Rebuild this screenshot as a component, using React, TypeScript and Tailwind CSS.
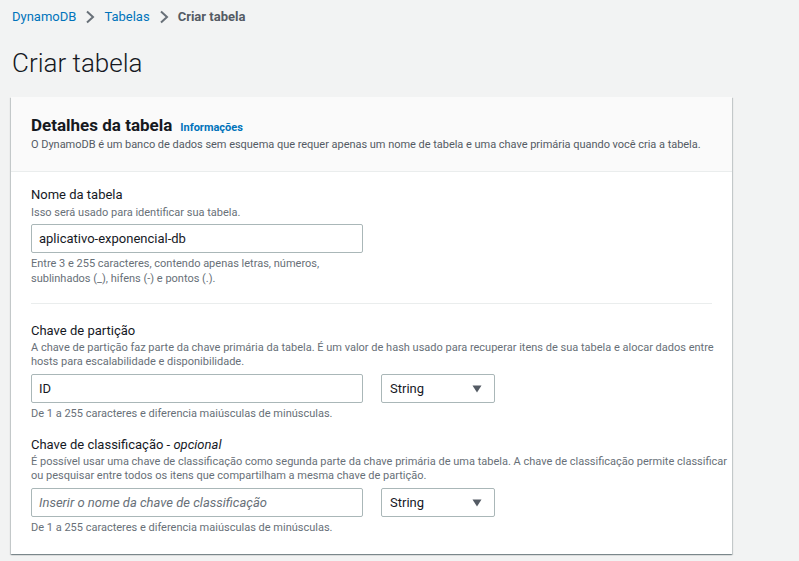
import React from "react";

const Chevron = () => (
  <svg width="10" height="14" viewBox="0 0 10 14" className="mx-[9px]">
    <path d="M2 1.5 L8 7 L2 12.5" fill="none" stroke="#687078" strokeWidth="2" />
  </svg>
);

const Caret = () => (
  <svg width="10" height="8" viewBox="0 0 10 8">
    <path d="M0.5 0.5 H9.5 L5 7.5 Z" fill="#545b64" />
  </svg>
);

const Select = () => (
  <div className="w-[114px] h-[29px] border border-[#aab7b8] rounded-[2px] bg-white flex items-center justify-between pl-[8px] pr-[12px] text-[13px] text-[#16191f]">
    <span>String</span>
    <Caret />
  </div>
);

export default function App() {
  return (
    <div
      className="min-h-[561px] w-full bg-[#f2f3f3] px-[11px] pt-[7px]"
      style={{ fontFamily: "Roboto, 'Noto Sans', Arial, sans-serif" }}
    >
      <div className="flex items-center h-[20px] text-[13px] pl-[1px]">
        <span className="text-[#0073bb]">DynamoDB</span>
        <Chevron />
        <span className="text-[#0073bb]">Tabelas</span>
        <Chevron />
        <span className="text-[#545b64] font-bold">Criar tabela</span>
      </div>
      <h1 className="mt-[21px] h-[30px] leading-[30px] text-[26px] font-light text-[#16191f] pl-[1px]">
        Criar tabela
      </h1>
      <div className="mt-[19px] w-[721px] bg-white shadow-[0_1px_1px_0_rgba(0,28,36,0.3),1px_1px_1px_0_rgba(0,28,36,0.15),-1px_1px_1px_0_rgba(0,28,36,0.15)]">
        <div className="bg-[#fafafa] border-b border-[#eaeded] px-[20px] pt-[16px] pb-[18px]">
          <div className="flex items-baseline h-[24px]">
            <span className="text-[17px] font-bold text-[#16191f]">Detalhes da tabela</span>
            <span className="ml-[8px] text-[11px] font-bold text-[#0073bb]">Informações</span>
          </div>
          <div className="text-[11px] leading-[16px] text-[#545b64] tracking-[-0.03px]">
            O DynamoDB é um banco de dados sem esquema que requer apenas um nome de tabela e uma chave primária quando você cria a tabela.
          </div>
        </div>
        <div className="px-[20px] pt-[13px] pb-[19px]">
          <div className="text-[13px] leading-[20px] text-[#16191f]">Nome da tabela</div>
          <div className="text-[11px] leading-[16px] text-[#687078]">Isso será usado para identificar sua tabela.</div>
          <div className="mt-[3px] w-[332px] h-[29px] border border-[#aab7b8] rounded-[2px] bg-white flex items-center px-[7px] text-[13px] text-[#16191f]">
            aplicativo-exponencial-db
          </div>
          <div className="mt-[3px] text-[11px] leading-[15px] text-[#687078]">
            Entre 3 e 255 caracteres, contendo apenas letras, números,
            <br />
            sublinhados (_), hifens (-) e pontos (.).
          </div>
          <div className="mt-[17px] border-t border-[#eaeded]" />
          <div className="mt-[17px] text-[13px] leading-[20px] text-[#16191f]">Chave de partição</div>
          <div className="text-[11px] leading-[14px] text-[#687078] w-[700px]">
            A chave de partição faz parte da chave primária da tabela. É um valor de hash usado para recuperar itens de sua tabela e alocar dados entre hosts para escalabilidade e disponibilidade.
          </div>
          <div className="mt-[5px] flex gap-[18px]">
            <div className="w-[332px] h-[29px] border border-[#aab7b8] rounded-[2px] bg-white flex items-center px-[7px] text-[13px] text-[#16191f]">
              ID
            </div>
            <Select />
          </div>
          <div className="mt-[3px] text-[11px] leading-[15px] text-[#687078]">
            De 1 a 255 caracteres e diferencia maiúsculas de minúsculas.
          </div>
          <div className="mt-[14px] text-[13px] leading-[20px] text-[#16191f]">
            Chave de classificação - <i>opcional</i>
          </div>
          <div className="text-[11px] leading-[14px] text-[#687078] w-[700px]">
            É possível usar uma chave de classificação como segunda parte da chave primária de uma tabela. A chave de classificação permite classificar ou pesquisar entre todos os itens que compartilham a mesma chave de partição.
          </div>
          <div className="mt-[5px] flex gap-[18px]">
            <div className="w-[332px] h-[29px] border border-[#aab7b8] rounded-[2px] bg-white flex items-center px-[7px] text-[13px] text-[#687078] italic">
              Inserir o nome da chave de classificação
            </div>
            <Select />
          </div>
          <div className="mt-[3px] text-[11px] leading-[15px] text-[#687078]">
            De 1 a 255 caracteres e diferencia maiúsculas de minúsculas.
          </div>
        </div>
      </div>
    </div>
  );
}
